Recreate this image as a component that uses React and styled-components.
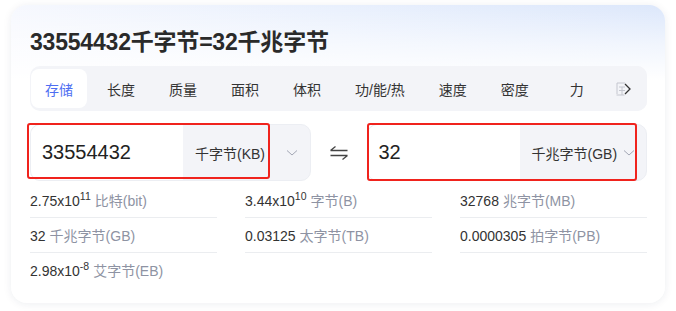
import React from 'react'
import styled, { createGlobalStyle } from 'styled-components'

const Global = createGlobalStyle`
  html, body {
    margin: 0;
    padding: 0;
    background: #fff;
    font-family: "Liberation Sans", "Noto Sans CJK SC", sans-serif;
  }
`

const Page = styled.div`
  padding: 5px 11px 8px 11px;
`

const Card = styled.div`
  width: 654px;
  height: 298px;
  box-sizing: border-box;
  border-radius: 16px;
  padding: 22px 18px 0 19px;
  background:
    linear-gradient(to bottom, rgba(255,255,255,0) 0, rgba(255,255,255,0.6) 40px, #fff 75px),
    linear-gradient(to right, #f6f8fe 0%, #e9f0fd 50%, #dce7fb 100%);
  box-shadow: 0 1px 8px rgba(30, 40, 80, 0.08);
`

const Title = styled.h1`
  margin: 0;
  font-size: 23px;
  line-height: 30px;
  font-weight: 700;
  color: #2a2a2a;
  letter-spacing: -0.2px;
`

const TabBar = styled.div`
  position: relative;
  margin-top: 9px;
  height: 45px;
  box-sizing: border-box;
  padding: 3px 1px;
  display: flex;
  gap: 6px;
  background: #f3f4f8;
  border-radius: 10px;
  overflow: hidden;
`

const Tab = styled.div`
  min-width: 56px;
  padding: 0 14px;
  box-sizing: border-box;
  display: flex;
  align-items: center;
  justify-content: center;
  font-size: 14px;
  color: ${p => (p.$active ? '#4e6ef2' : '#333')};
  background: ${p => (p.$active ? '#fff' : 'transparent')};
  border-radius: 8px;
  white-space: nowrap;
`

const More = styled.div`
  position: absolute;
  right: 0;
  top: 0;
  bottom: 0;
  width: 46px;
  display: flex;
  align-items: center;
  padding-left: 13px;
  box-sizing: border-box;
  background: linear-gradient(to right, rgba(243,244,248,0.2), #f3f4f8 40%);
`

const InputRow = styled.div`
  margin-top: 13px;
  display: grid;
  grid-template-columns: 1fr 56px 1fr;
  height: 57px;
`

const Group = styled.div`
  position: relative;
  display: flex;
  background: #f3f4f8;
  border: 1px solid #eceef3;
  border-radius: 10px;
`

const NumberBox = styled.div`
  width: 152px;
  background: #fff;
  border-radius: 9px 0 0 9px;
  display: flex;
  align-items: center;
  padding-left: 11px;
  box-sizing: border-box;
  font-size: 20px;
  color: #222;
`

const Unit = styled.div`
  flex: 1;
  display: flex;
  align-items: center;
  padding-left: 12px;
  font-size: 14px;
  color: #333;
  white-space: nowrap;
`

const Chevron = styled.svg`
  margin-left: ${p => p.$gap}px;
  flex: none;
`

const Swap = styled.div`
  display: flex;
  align-items: center;
  justify-content: center;
`

const Highlight = styled.div`
  position: absolute;
  left: ${p => p.$l}px;
  top: -2px;
  width: ${p => p.$w}px;
  height: ${p => p.$h}px;
  border: 2px solid #f0231d;
  border-radius: 3px;
  box-sizing: border-box;
  pointer-events: none;
`

const Results = styled.div`
  margin-top: 2px;
  display: grid;
  grid-template-columns: repeat(3, 1fr);
  column-gap: 28px;
`

const Cell = styled.div`
  height: 35px;
  box-sizing: border-box;
  display: flex;
  align-items: center;
  font-size: 14px;
  color: #333;
  border-bottom: ${p => (p.$last ? 'none' : '1px solid #ebedf0')};
  padding-top: ${p => (p.$last ? '0' : '1px')};
  white-space: nowrap;
`

const Value = styled.span`
  line-height: 20px;
`

const Sup = styled.sup`
  font-size: 10.5px;
  line-height: 0;
  vertical-align: 6px;
`

const Name = styled.span`
  color: #8e93a3;
  margin-left: 4px;
`

const tabs = ['存储', '长度', '质量', '面积', '体积', '功/能/热', '速度', '密度', '力']

const results = [
  { v: '2.75x10', e: '11', u: '比特(bit)' },
  { v: '3.44x10', e: '10', u: '字节(B)' },
  { v: '32768', u: '兆字节(MB)' },
  { v: '32', u: '千兆字节(GB)' },
  { v: '0.03125', u: '太字节(TB)' },
  { v: '0.0000305', u: '拍字节(PB)' },
  { v: '2.98x10', e: '-8', u: '艾字节(EB)', last: true },
]

function Down({ gap }) {
  return (
    <Chevron $gap={gap} width="12" height="8" viewBox="0 0 12 8">
      <path d="M1 1.5l5 4.5 5-4.5" fill="none" stroke="#a3a7b5" strokeWidth="1" />
    </Chevron>
  )
}

export default function App() {
  return (
    <Page>
      <Global />
      <Card>
        <Title>33554432千字节=32千兆字节</Title>
        <TabBar>
          {tabs.map((t, i) => (
            <Tab key={t} $active={i === 0}>{t}</Tab>
          ))}
          <More>
            <svg width="18" height="16" viewBox="0 0 18 16">
              <path d="M3 2h8M3 2v11M2.5 14h8M5 6h6M5 9.5h6M8 6v8" fill="none" stroke="#c4c6cf" strokeWidth="1" />
              <path d="M11 3l5 5-5 5" fill="none" stroke="#333" strokeWidth="1.3" />
            </svg>
          </More>
        </TabBar>
        <InputRow>
          <Group>
            <NumberBox>33554432</NumberBox>
            <Unit>
              千字节(KB)
              <Down gap={21} />
            </Unit>
            <Highlight $l={-4} $w={243} $h={56} />
          </Group>
          <Swap>
            <svg width="20" height="14" viewBox="0 0 20 14">
              <path d="M1.5 4.5h17M1.5 4.5l5-4" fill="none" stroke="#444" strokeWidth="1.3" />
              <path d="M1.5 9.5h17M18.5 9.5l-5 4" fill="none" stroke="#444" strokeWidth="1.3" />
            </svg>
          </Swap>
          <Group>
            <NumberBox>32</NumberBox>
            <Unit>
              千兆字节(GB)
              <Down gap={6} />
            </Unit>
            <Highlight $l={-1} $w={270} $h={58} />
          </Group>
        </InputRow>
        <Results>
          {results.map(r => (
            <Cell key={r.u} $last={r.last}>
              <Value>
                {r.v}
                {r.e && <Sup>{r.e}</Sup>}
                <Name>{r.u}</Name>
              </Value>
            </Cell>
          ))}
        </Results>
      </Card>
    </Page>
  )
}
